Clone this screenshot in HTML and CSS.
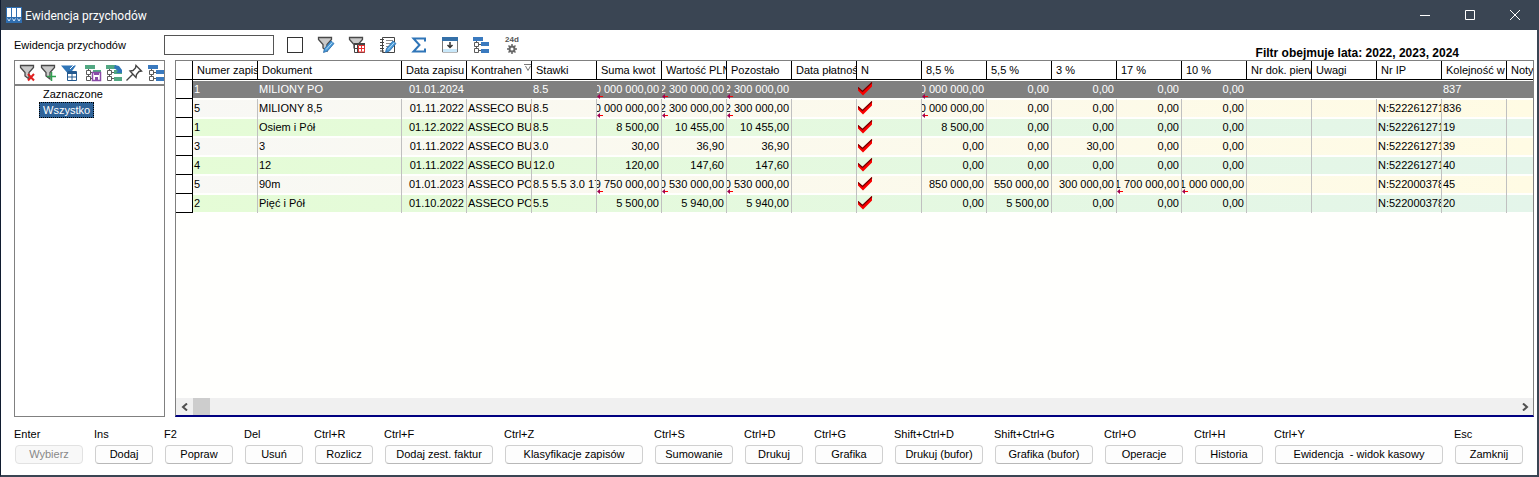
FILE: index.html
```html
<!DOCTYPE html>
<html lang="pl">
<head>
    <meta charset="UTF-8">
    <meta name="viewport" content="width=device-width, initial-scale=1.0">
    <title>Ewidencja przychodów</title>
    <link rel="stylesheet" href="styles.css">
</head>
<body>

    <svg class="defs" width="0" height="0" aria-hidden="true">
        <symbol id="check" viewBox="0 0 16 14">
            <path d="M0 5L4.500 9L14 0V4.500L5 13.500L0 8.500Z" fill="#f80000"/>
            <path d="M0 5.500L4.500 9.500L14 .5" fill="none" stroke="#700000" stroke-width="1.200"/>
        </symbol>
        <symbol id="more" viewBox="0 0 6 5">
            <path d="M2 2.500H6" stroke="#ff0000"/>
            <path d="M0 2.500L3 0V5Z" fill="#a00050"/>
        </symbol>
        <symbol id="funnel" viewBox="0 0 18 18">
            <path d="M1.500 1.500H14.500V3.500L10 8.500V15L6 12V8.500L1.500 3.500Z" fill="#c9c9c9" stroke="#484848" stroke-width="1.300"/>
        </symbol>
        <symbol id="tree" viewBox="0 0 18 18">
            <path d="M4.500 5V14.500H9M4.500 8.500H9" fill="none" stroke="#5a5a5a"/>
            <path d="M2.500 6.500h4v4h-4zM2.500 12.500h4v4h-4z" fill="#fff" stroke="#5a5a5a"/>
            <path d="M1 1H11V5H1zM9 6H17V10H9zM9 13H17V17H9z" fill="currentColor"/>
        </symbol>
        <symbol id="pencil" viewBox="0 0 18 18">
            <path d="M6.500 16.500L7.500 12.500L14 5L17 7.500L10.500 15Z" fill="#4a9ad8" stroke="#2468a8" stroke-width=".8"/>
            <path d="M9 13.500L15.300 6.500" stroke="#b5dcf5"/>
        </symbol>
    </svg>

    <div class="window">
        <header class="titlebar">
            <svg class="app-icon" width="16" height="16" viewBox="0 0 16 16">
                <path fill="#2f6eb0" d="M0 0h16v16H0z"/>
                <path fill="#fff" d="M1 1h4v9H1zM6 1h4v9H6zM11 1h4v9h-4z"/>
                <path d="M1.500 11.500L3 14L4.500 11.500M6.500 11.500L8 14L9.500 11.500M11.500 11.500L13 14L14.500 11.500" fill="none" stroke="#d6e8fa"/>
            </svg>
            <h1>Ewidencja przychodów</h1>
            <div class="window-buttons">
                <button aria-label="Minimalizuj"><svg width="12" height="12"><path d="M1 6.500H11"/></svg></button>
                <button aria-label="Maksymalizuj"><svg width="12" height="12"><path d="M1.500 1.500H10.500V10.500H1.500Z"/></svg></button>
                <button aria-label="Zamknij okno"><svg width="12" height="12"><path d="M1 1L11 11M11 1L1 11"/></svg></button>
            </div>
        </header>

        <div class="toolbar">
            <label for="search">Ewidencja przychodów</label>
            <input type="text" id="search">
            <input type="checkbox" class="tick" aria-label="Zaznacz">
            <div class="tools">
                <button aria-label="Edytuj filtr"><svg width="18" height="18"><use href="#funnel"/><use href="#pencil"/></svg></button>
                <button aria-label="Filtr tabeli"><svg width="18" height="18"><use href="#funnel"/><path d="M6.500 7.500h10v9h-10z" fill="#fff" stroke="#444"/><path d="M6 7h11v2H6z" fill="#444"/><path d="M9.500 9v7M6.500 12.500h10" stroke="#444"/><path d="M10.500 9.500h6v3h-6zM10.500 12.500h6v3.500h-6zM13.500 9.500v6" fill="none" stroke="#e83030"/></svg></button>
                <button aria-label="Notatki"><svg width="18" height="18"><path d="M3.500 1.500h12v15h-12z" fill="#fff" stroke="#444"/><path d="M1 3.500h4M1 6.500h4M1 9.500h4M1 12.500h4M1 15h4" stroke="#444"/><path d="M7 4.500h7M7 7.500h6M7 10.500h4" stroke="#8a8a8a"/><use href="#pencil"/></svg></button>
                <button aria-label="Suma"><svg width="18" height="18"><path d="M15 5.500V2.500H3.500L9.500 9L3.500 15.500H15V12.500" fill="none" stroke="#2f75b8" stroke-width="2"/></svg></button>
                <button aria-label="Zwiń"><svg width="18" height="18"><path d="M1.500 3h15v13h-15z" fill="#fff" stroke="#777"/><path d="M1 1h16v4H1z" fill="#3470a8"/><path d="M2 13h14v3H2z" fill="#c9e8fa"/><path d="M9 6v6M6.500 9L9 11.500L11.500 9" fill="none" stroke="#333" stroke-width="1.500"/></svg></button>
                <button class="blue" aria-label="Drzewo"><svg width="18" height="18"><use href="#tree"/></svg></button>
                <button class="day-tool" aria-label="Ustawienia 24d"><span>24d</span><svg width="12" height="10" viewBox="0 0 12 10"><circle cx="6" cy="5" r="2.500" fill="none" stroke="#666" stroke-width="2"/><path d="M6 0v2M6 8v2M1 5h2M9 5h2M2.500 1.500l1.500 1.500M8 7l1.500 1.500M9.500 1.500L8 3M4 7L2.500 8.500" stroke="#666" stroke-width="1.500"/></svg></button>
            </div>
            <strong class="filter-note">Filtr obejmuje lata: 2022, 2023, 2024</strong>
        </div>

        <main class="content">
            <aside class="side">
                <div class="side-tools">
                    <button aria-label="Usuń filtr"><svg width="18" height="18"><use href="#funnel"/><path d="M9 10L15 16.500M15 10L9 16.500" stroke="#e02020" stroke-width="2"/></svg></button>
                    <button aria-label="Dodaj filtr"><svg width="18" height="18"><use href="#funnel"/><path d="M11.500 8v9M7 12.500h9" stroke="#30a050" stroke-width="1.500"/></svg></button>
                    <button aria-label="Filtr tabeli"><svg width="18" height="18"><path d="M0 1.500H15L10 8.500V14L6 12V8.500Z" fill="#2f75b8"/><path d="M9 5L13 1" stroke="#fff"/><path d="M6.500 7.500h9v9h-9z" fill="#fff" stroke="#245a90"/><path d="M7 8h8.500v2H7z" fill="#245a90"/><path d="M11 8v8.500M7 13h8.500" stroke="#245a90"/></svg></button>
                    <button class="green tree-tool" aria-label="Zapisz drzewo"><svg width="18" height="18"><use href="#tree"/><path d="M8.500 8.500h8v8h-8z" fill="#fff" stroke="#8a4aa8" stroke-width="1.500"/><path d="M10 9h5v2h-5zM11 13h3v3h-3z" fill="#8a4aa8"/></svg></button>
                    <button class="green" aria-label="Odśwież drzewo"><svg width="18" height="18"><use href="#tree"/><path d="M10 1L14 2L17 6V9H11L13 7L9 4Z" fill="#2f75b8"/></svg></button>
                    <button aria-label="Przypnij"><svg width="18" height="18"><path d="M10 1.500L15.500 7L13 7.500L10.500 10.500L10 13.500L4 7L7 6.500L9.500 4ZM6.500 10.500L.5 16.500" fill="#fff" stroke="#444" stroke-width="1.400"/></svg></button>
                    <button class="blue" aria-label="Drzewo"><svg width="18" height="18"><use href="#tree"/></svg></button>
                </div>
                <ul class="groups">
                    <li><a href="#">Zaznaczone</a></li>
                    <li><a href="#" class="selected">Wszystko</a></li>
                </ul>
            </aside>

            <section class="grid">
                <table id="records">
                    <colgroup>
                        <col class="c-mark"><col><col class="c-doc">
                        <col><col><col><col><col><col><col><col><col><col><col><col><col><col><col><col><col>
                        <col class="c-rest">
                    </colgroup>
                    <thead>
                        <tr>
                            <th></th>
                            <th>Numer zapis</th>
                            <th>Dokument</th>
                            <th>Data zapisu</th>
                            <th class="sorted">Kontrahen<svg width="8" height="8"><path d="M0 .5h8M1.500 2L4 6.500L6.500 2" fill="none" stroke="#777"/></svg></th>
                            <th>Stawki</th>
                            <th>Suma kwot</th>
                            <th>Wartość PLN</th>
                            <th>Pozostało</th>
                            <th>Data płatnoś</th>
                            <th>N</th>
                            <th>8,5 %</th>
                            <th>5,5 %</th>
                            <th>3 %</th>
                            <th>17 %</th>
                            <th>10 %</th>
                            <th>Nr dok. pierw</th>
                            <th>Uwagi</th>
                            <th>Nr IP</th>
                            <th>Kolejność w</th>
                            <th>Noty</th>
                        </tr>
                    </thead>
                    <tbody></tbody>
                </table>
                <div class="scrollbar">
                    <button aria-label="Przewiń w lewo"><svg width="8" height="8"><path d="M6 0.500L2 4L6 7.500"/></svg></button>
                    <div class="thumb"></div>
                    <button class="right" aria-label="Przewiń w prawo"><svg width="8" height="8"><path d="M2 0.500L6 4L2 7.500"/></svg></button>
                </div>
            </section>
        </main>

        <footer class="actions">
            <div><label for="b1">Enter</label><button id="b1" disabled>Wybierz</button></div>
            <div><label for="b2">Ins</label><button id="b2">Dodaj</button></div>
            <div><label for="b3">F2</label><button id="b3">Popraw</button></div>
            <div><label for="b4">Del</label><button id="b4">Usuń</button></div>
            <div><label for="b5">Ctrl+R</label><button id="b5">Rozlicz</button></div>
            <div><label for="b6">Ctrl+F</label><button id="b6">Dodaj zest. faktur</button></div>
            <div><label for="b7">Ctrl+Z</label><button id="b7">Klasyfikacje zapisów</button></div>
            <div><label for="b8">Ctrl+S</label><button id="b8">Sumowanie</button></div>
            <div><label for="b9">Ctrl+D</label><button id="b9">Drukuj</button></div>
            <div><label for="b10">Ctrl+G</label><button id="b10">Grafika</button></div>
            <div><label for="b11">Shift+Ctrl+D</label><button id="b11">Drukuj (bufor)</button></div>
            <div><label for="b12">Shift+Ctrl+G</label><button id="b12">Grafika (bufor)</button></div>
            <div><label for="b13">Ctrl+O</label><button id="b13">Operacje</button></div>
            <div><label for="b14">Ctrl+H</label><button id="b14">Historia</button></div>
            <div><label for="b15">Ctrl+Y</label><button id="b15">Ewidencja&nbsp; - widok kasowy</button></div>
            <div><label for="b16">Esc</label><button id="b16">Zamknij</button></div>
        </footer>
    </div>

    <script src="script.js"></script>
</body>
</html>
```
FILE: styles.css
```css
* {
    box-sizing: border-box;
}
body {
    margin: 0;
    font-family: "Liberation Sans", Arial, sans-serif;
    font-size: 11px;
    line-height: 14px;
    color: #000;
}
button {
    font: inherit;
    color: inherit;
    padding: 0;
    border: 0;
    background: none;
}
svg {
    display: block;
}
.defs {
    position: absolute;
}
.blue { color: #3a7abf; }
.green { color: #52a883; }

.window {
    display: flex;
    flex-direction: column;
    min-height: 100vh;
    background: #fff;
    border: solid #3a4553;
    border-width: 0 2px 2px 1px;
    border-left-color: #101c30;
}

/* Title bar */
.titlebar {
    display: flex;
    align-items: center;
    height: 30px;
    padding-left: 5px;
    gap: 3px;
    background: #3a4553;
    color: #fff;
}
.titlebar h1 {
    margin: 0;
    padding-top: 2px;
    font: 12px Roboto, "Noto Sans", sans-serif;
}
.window-buttons {
    display: flex;
    margin-left: auto;
}
.window-buttons button {
    display: grid;
    place-items: center;
    width: 45px;
    height: 28px;
}
.window-buttons path {
    fill: none;
    stroke: #fff;
}

/* Search and main tools */
.toolbar {
    display: flex;
    align-items: center;
    height: 30px;
    padding-left: 13px;
}
.toolbar label {
    width: 150px;
}
#search {
    width: 110px;
    height: 20px;
    border: 1px solid #555;
    font: inherit;
}
.tick {
    appearance: none;
    width: 16px;
    height: 16px;
    margin: 0 0 0 13px;
    border: 1px solid #333;
}
.tools {
    display: flex;
    gap: 13px;
    margin-left: 14px;
}
.day-tool {
    display: flex;
    flex-direction: column;
    align-items: center;
    width: 18px;
    color: #555;
    font-size: 8px;
    font-weight: bold;
    line-height: 8px;
}
.filter-note {
    align-self: flex-end;
    margin: 0 78px 0 auto;
    font-size: 12px;
    line-height: 13px;
}

/* Side panel */
.content {
    display: flex;
    flex: 1;
    gap: 10px;
    padding: 0 3px 0 13px;
}
.side {
    width: 151px;
    border: 1px solid #808080;
}
.side-tools {
    display: flex;
    gap: 3px;
    align-items: center;
    height: 25px;
    padding-left: 4px;
    overflow: hidden;
    border-bottom: 2px solid #808080;
}
.side-tools button {
    flex: none;
}
.tree-tool {
    margin-left: 2px;
}
.groups {
    margin: 0;
    padding: 0 0 0 24px;
    list-style: none;
}
.groups li {
    height: 16px;
}
.groups a {
    display: inline-block;
    padding: 0 3px;
    border: 1px solid transparent;
    color: #000;
    text-decoration: none;
}
.groups .selected {
    background: #2f6399;
    border: 1px dotted #000;
    color: #fff;
}

/* Records */
.grid {
    display: flex;
    flex-direction: column;
    flex: 1;
    min-width: 0;
    overflow: hidden;
    background: #fffffd;
    border: 1px solid #808080;
    border-bottom: 2px solid #000080;
}
#records {
    width: 100%;
    table-layout: fixed;
    border-collapse: separate;
    border-spacing: 0;
}
col { width: 65px; }
.c-mark { width: 17px; }
.c-doc { width: 144px; }
.c-rest { width: auto; }
th, td {
    height: 19px;
    padding: 0 2px 2px 1px;
    overflow: hidden;
    white-space: nowrap;
    border-right: 1px solid #c0c0c0;
}
th {
    padding: 0 0 0 4px;
    font-weight: normal;
    text-align: left;
    background: #fff;
    border-right: 1px solid #000;
    border-bottom: 1px solid #000;
}
th:last-child, td:last-child {
    border-right: 0;
}
.sorted svg {
    display: inline-block;
    margin-left: 2px;
    vertical-align: 2px;
}
tbody tr {
    background: linear-gradient(to right, #f8f8f5, #fffbe4) 0 1px / 100% 17px no-repeat;
}
tbody tr:nth-child(odd) {
    background-image: linear-gradient(to right, #e5fcd6, #e4f5ea);
}
tbody tr.current {
    background-image: linear-gradient(#808080, #808080);
    color: #fff;
}
.current td {
    border-right-color: transparent;
}
tbody .mark {
    background: #fff;
    border-right: 1px solid #000;
    border-bottom: 1px solid #000;
}
.num {
    position: relative;
}
.num span {
    display: flex;
    justify-content: flex-end;
}
.more {
    position: absolute;
    left: 0;
    bottom: 0;
}

/* Horizontal scrollbar */
.scrollbar {
    display: flex;
    height: 17px;
    margin-top: auto;
    background: #f0f0f0;
}
.scrollbar button {
    display: grid;
    place-items: center;
    width: 17px;
}
.scrollbar path {
    fill: none;
    stroke: #505050;
    stroke-width: 2;
}
.thumb {
    width: 17px;
    background: #cdcdcd;
}
.scrollbar .right {
    margin-left: auto;
}

/* Bottom buttons */
.actions {
    display: grid;
    grid-template-columns: 70px 60px 70px 60px 60px 110px 140px 80px 60px 70px 90px 100px 80px 70px 170px 70px;
    column-gap: 10px;
    padding: 10px 0 11px 13px;
}
.actions label {
    display: block;
    margin-bottom: 4px;
}
.actions button {
    display: block;
    width: calc(100% - 2px);
    height: 19px;
    margin-left: 1px;
    padding-bottom: 2px;
    background: #fdfdfd;
    border: 1px solid #d0d0d0;
    border-bottom-color: #b8b8b8;
    border-radius: 4px;
}
.actions button:disabled {
    color: #888;
    background: #f8f8f8;
    border-color: #e2e2e2;
}
```
FILE: script.js
```js
// doc no, document, date, contractor, rates, total, PLN value, left, 8.5, 5.5, 3, 17, 10, IP no, order
const records = [
    ["1", "MILIONY PO", "01.01.2024", "", "8.5", "<0 000 000,00", "<2 300 000,00", "<2 300 000,00", "<0 000 000,00", "0,00", "0,00", "0,00", "0,00", "", "837"],
    ["5", "MILIONY 8,5", "01.11.2022", "ASSECO BUS", "8.5", "<0 000 000,00", "<2 300 000,00", "<2 300 000,00", "<0 000 000,00", "0,00", "0,00", "0,00", "0,00", "N:522261271", "836"],
    ["1", "Osiem i Pół", "01.12.2022", "ASSECO BUS", "8.5", "8 500,00", "10 455,00", "10 455,00", "8 500,00", "0,00", "0,00", "0,00", "0,00", "N:522261271", "19"],
    ["3", "3", "01.11.2022", "ASSECO BUS", "3.0", "30,00", "36,90", "36,90", "0,00", "0,00", "30,00", "0,00", "0,00", "N:522261271", "39"],
    ["4", "12", "01.11.2022", "ASSECO BUS", "12.0", "120,00", "147,60", "147,60", "0,00", "0,00", "0,00", "0,00", "0,00", "N:522261271", "40"],
    ["5", "90m", "01.01.2023", "ASSECO POL", "8.5 5.5 3.0 17", "<9 750 000,00", "<0 530 000,00", "<0 530 000,00", "850 000,00", "550 000,00", "300 000,00", "<1 700 000,00", "<1 000 000,00", "N:522000378", "45"],
    ["2", "Pięć i Pół", "01.10.2022", "ASSECO POL", "5.5", "5 500,00", "5 940,00", "5 940,00", "0,00", "5 500,00", "0,00", "0,00", "0,00", "N:522000378", "20"]
];

function text(value) {
    return `<td>${value}</td>`;
}

// A leading "<" marks a value too wide for its column
function num(value) {
    const wide = value.startsWith("<");
    const arrow = wide ? '<svg class="more" width="6" height="5"><use href="#more"/></svg>' : "";
    return `<td class="num"><span>${wide ? value.slice(1) : value}</span>${arrow}</td>`;
}

const check = '<td><svg width="16" height="14"><use href="#check"/></svg></td>';

document.querySelector("#records tbody").innerHTML = records.map((r, i) =>
    `<tr class="${i === 0 ? "current" : ""}"><td class="mark"></td>` +
    text(r[0]) + text(r[1]) + num(r[2]) + text(r[3]) + text(r[4]) +
    r.slice(5, 8).map(num).join("") + text("") + check +
    r.slice(8, 13).map(num).join("") + text("") + text("") +
    text(r[13]) + text(r[14]) + text("") + "</tr>"
).join("");
```
